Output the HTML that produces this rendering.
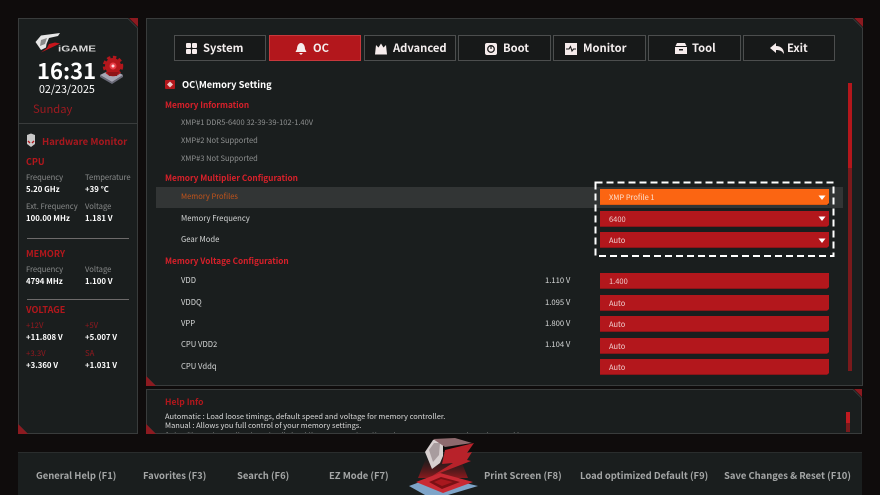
<!DOCTYPE html>
<html><head><meta charset="utf-8">
<style>
html,body{margin:0;padding:0;background:#0f0c0c;}
#p{position:relative;width:880px;height:495px;overflow:hidden;background:#0f0c0c;font-family:"Noto Sans CJK SC","Liberation Sans",sans-serif;color:#fff;}
#p>div,#p>svg{position:absolute;}
.t{white-space:nowrap;line-height:14px;height:14px;}
.g{font-size:7.6px;color:#8a8c8c;}
.v{font-size:7.8px;color:#fff;font-weight:700;}
.rg{font-size:7.8px;color:#94191f;}
.h{font-size:9px;color:#b3171c;font-weight:700;}
.s{font-size:8.25px;color:#d8202a;font-weight:700;}
.i{font-size:7.5px;color:#8e9090;}
.l{font-size:7.7px;color:#d4d6d6;}
.f{left:600px;width:229px;height:16px;line-height:17px;background:#b3171c;border-bottom:1px solid #8a1519;box-sizing:border-box;font-size:7.5px;color:#f0d0d0;padding-left:9px;}
.tab{top:35px;height:26px;box-sizing:border-box;border:1px solid #4c4e4e;background:#171919;}
.tt{top:40px;font-size:11.2px;font-weight:700;color:#f4eeee;white-space:nowrap;line-height:16px;}
.b{top:468px;font-size:9.45px;font-weight:700;color:#a4a6a6;white-space:nowrap;line-height:15px;}
.hr{left:27px;width:102px;height:1px;background:#6d6a6a;}
</style></head><body><div id="p">

<!-- panels -->
<svg style="left:0;top:0" width="880" height="495">
<path d="M18.5 18.5H128L137.5 28V433.5H27L18.5 425Z" fill="#1a1e1e" stroke="#393c3c"/>
<path d="M146.5 18.5H853L862.500 28V385.500H155L146.500 377Z" fill="#1a1e1e" stroke="#393c3c"/>
<path d="M146.5 389.5H853L861.5 398V433.5H155L146.5 425Z" fill="#1a1e1e" stroke="#393c3c"/>
<rect x="18" y="452" width="844" height="43" fill="#1a1e1e"/>
<rect x="18" y="452" width="844" height="1" fill="#2a2d2d"/>
<path d="M129 18H138V27Z" fill="#8c1a20"/>
<path d="M18 424L28 434H18Z" fill="#8c1a20"/>
<path d="M146 376L156 386H146Z" fill="#8c1a20"/>
<path d="M146 424L156 434H146Z" fill="#8c1a20"/>
<path d="M854 18H863V27Z" fill="#8c1a20"/>
<path d="M854 389H862V397Z" fill="#8c1a20"/>
<rect x="19" y="123" width="118" height="1" fill="#393c3c"/>
<rect x="156" y="187" width="687" height="21" fill="#323535"/>
<rect x="848" y="83" width="4" height="85" fill="#b3171c"/>
<rect x="848" y="168" width="4" height="203" fill="#7a1a1c"/>
<rect x="846" y="412" width="4" height="11" fill="#c01a20"/>
<rect x="846" y="423" width="4" height="9" fill="#7a1a1c"/>
<rect x="595.5" y="182.5" width="238" height="73.5" fill="none" stroke="#fff" stroke-width="2" stroke-dasharray="7 4"/>
<!-- logo -->
<path d="M35.500 42L41 35.500L60 33L58 36L49 38L46.500 44L46 47.500L41 50Z" fill="#e6e6e6"/>
<path d="M41 40L47 38L45 44L40 46Z" fill="#8a8a8a"/>
<path d="M41 52.500L60 43.500L55 42.500L49 44L47 48Z" fill="#c8161c"/>
<text x="58" y="51.500" font-family="Liberation Sans" font-weight="700" font-size="8.500" fill="#d6d6d6" textLength="38" lengthAdjust="spacingAndGlyphs">iGAME</text>
<!-- gear icon -->
<path d="M100 75L112 69L123 75L112 82Z" fill="#a6a6b4"/>
<path d="M100 75V77L112 84L123 77V75L112 82Z" fill="#6a6a78"/>
<circle cx="113" cy="66" r="8" fill="#b3171c"/>
<circle cx="113" cy="66" r="9" fill="none" stroke="#b3171c" stroke-width="2.500" stroke-dasharray="3.500 2.500"/>
<circle cx="113" cy="66" r="3.500" fill="#e83a44"/>
<circle cx="113" cy="66" r="1.500" fill="#ffd8dc"/>
<path d="M107 72H119L117 76H109Z" fill="#8e1418"/>
<!-- HW monitor icon -->
<path d="M27 135L31 133.500L35 135V144L31 147L27 144Z" fill="#c8c8c8"/>
<path d="M28 141L30 143M34 141L32 143" stroke="#b3171c" stroke-width="1.400"/>
</svg>

<!-- left top -->
<div class="t" style="left:37px;top:57px;font-size:22px;font-weight:700;line-height:26px;height:26px;">16:31</div>
<div class="t" style="left:39px;top:83px;font-size:10.7px;">02/23/2025</div>
<div class="t" style="left:33px;top:102px;font-size:11.2px;color:#9c1a20;">Sunday</div>

<div class="t" style="left:42px;top:134px;font-size:9.5px;color:#a8181e;font-weight:700;">Hardware Monitor</div>
<div class="t h" style="left:26px;top:155px;">CPU</div>
<div class="t g" style="left:26px;top:171px;">Frequency</div>
<div class="t g" style="left:85px;top:171px;">Temperature</div>
<div class="t v" style="left:26px;top:183px;">5.20 GHz</div>
<div class="t v" style="left:85px;top:183px;">+39 °C</div>
<div class="t g" style="left:26px;top:200px;">Ext. Frequency</div>
<div class="t g" style="left:85px;top:200px;">Voltage</div>
<div class="t v" style="left:26px;top:212px;">100.00 MHz</div>
<div class="t v" style="left:85px;top:212px;">1.181 V</div>
<div class="hr" style="top:238px;"></div>
<div class="t h" style="left:26px;top:247px;">MEMORY</div>
<div class="t g" style="left:26px;top:263px;">Frequency</div>
<div class="t g" style="left:85px;top:263px;">Voltage</div>
<div class="t v" style="left:26px;top:275px;">4794 MHz</div>
<div class="t v" style="left:85px;top:275px;">1.100 V</div>
<div class="hr" style="top:299px;"></div>
<div class="t h" style="left:26px;top:303px;">VOLTAGE</div>
<div class="t rg" style="left:26px;top:319px;">+12V</div>
<div class="t rg" style="left:85px;top:319px;">+5V</div>
<div class="t v" style="left:26px;top:331px;">+11.808 V</div>
<div class="t v" style="left:85px;top:331px;">+5.007 V</div>
<div class="t rg" style="left:26px;top:347px;">+3.3V</div>
<div class="t rg" style="left:85px;top:347px;">SA</div>
<div class="t v" style="left:26px;top:359px;">+3.360 V</div>
<div class="t v" style="left:85px;top:359px;">+1.031 V</div>

<!-- tabs -->
<div class="tab" style="left:174px;width:92px;"></div>
<div class="tab" style="left:269px;width:92px;background:#b3171c;border-color:#c8383c;"></div>
<div class="tab" style="left:364px;width:92px;"></div>
<div class="tab" style="left:458px;width:93px;"></div>
<div class="tab" style="left:553px;width:93px;"></div>
<div class="tab" style="left:648px;width:93px;"></div>
<div class="tab" style="left:743px;width:92px;"></div>
<div class="tt" style="left:203px;">System</div>
<div class="tt" style="left:313px;">OC</div>
<div class="tt" style="left:393px;">Advanced</div>
<div class="tt" style="left:503px;">Boot</div>
<div class="tt" style="left:583px;">Monitor</div>
<div class="tt" style="left:692px;">Tool</div>
<div class="tt" style="left:787px;">Exit</div>

<div class="t" style="left:182px;top:77px;font-size:9.3px;font-weight:700;">OC\Memory Setting</div>
<div class="t s" style="left:165px;top:98px;">Memory Information</div>
<div class="t i" style="left:181px;top:116px;">XMP#1 DDR5-6400 32-39-39-102-1.40V</div>
<div class="t i" style="left:181px;top:134px;">XMP#2 Not Supported</div>
<div class="t i" style="left:181px;top:152px;">XMP#3 Not Supported</div>
<div class="t s" style="left:165px;top:171px;">Memory Multiplier Configuration</div>
<div class="t l" style="left:181px;top:190px;color:#c4541a;font-size:7.5px;">Memory Profiles</div>
<div class="t l" style="left:181px;top:212px;">Memory Frequency</div>
<div class="t l" style="left:181px;top:233px;">Gear Mode</div>
<div class="t s" style="left:165px;top:254px;">Memory Voltage Configuration</div>
<div class="t l" style="left:181px;top:274px;">VDD</div>
<div class="t l" style="left:181px;top:296px;">VDDQ</div>
<div class="t l" style="left:181px;top:317px;">VPP</div>
<div class="t l" style="left:181px;top:338px;">CPU VDD2</div>
<div class="t l" style="left:181px;top:360px;">CPU Vddq</div>
<div class="t l" style="left:545px;top:274px;">1.110 V</div>
<div class="t l" style="left:545px;top:296px;">1.095 V</div>
<div class="t l" style="left:545px;top:317px;">1.800 V</div>
<div class="t l" style="left:545px;top:338px;">1.104 V</div>

<div class="f" style="top:189px;background:#fb6512;border-bottom-color:#e05a10;color:#fbe0d0;">XMP Profile 1</div>
<div class="f" style="top:211px;">6400</div>
<div class="f" style="top:232px;">Auto</div>
<div class="f" style="top:273px;">1.400</div>
<div class="f" style="top:295px;">Auto</div>
<div class="f" style="top:316px;">Auto</div>
<div class="f" style="top:338px;">Auto</div>
<div class="f" style="top:359px;">Auto</div>

<!-- help -->
<div class="t" style="left:165px;top:395px;font-size:8.6px;font-weight:700;color:#b3171c;">Help Info</div>
<div class="t" style="left:165px;top:410px;font-size:7.47px;color:#d8d8d8;">Automatic : Load loose timings, default speed and voltage for memory controller.</div>
<div class="t" style="left:165px;top:419px;font-size:7.47px;color:#d8d8d8;">Manual : Allows you full control of your memory settings.</div>
<div style="left:165px;top:432px;width:680px;height:1px;overflow:hidden;"><div class="t" style="position:absolute;left:0;top:-4px;font-size:7.47px;color:#777;">Auto : The system will automatically load the appropriate settings for your memory configuration and frequency.</div></div>

<!-- bottom -->
<div class="b" style="left:36px;">General Help (F1)</div>
<div class="b" style="left:143px;">Favorites (F3)</div>
<div class="b" style="left:237px;">Search (F6)</div>
<div class="b" style="left:329px;">EZ Mode (F7)</div>
<div class="b" style="left:484px;">Print Screen (F8)</div>
<div class="b" style="left:580px;">Load optimized Default (F9)</div>
<div class="b" style="left:724px;">Save Changes &amp; Reset (F10)</div>

<!-- overlay icons -->
<svg style="left:0;top:0" width="880" height="495">
<g fill="#f6ecec">
<rect x="186" y="43" width="5" height="5" rx="1"/><rect x="192" y="43" width="5" height="5" rx="1"/><rect x="186" y="49" width="5" height="5" rx="1"/><rect x="192" y="49" width="5" height="5" rx="1"/>
<path d="M301 43C303.500 43 305 46 305 49L306.500 52H295.500L297 49C297 46 298.500 43 301 43ZM299 53H303L301 55Z"/>
<path d="M376 45L378.500 47.500L381 43.500L383.500 47.500L386 45L387 54.500H375Z"/>
<rect x="485" y="43" width="12" height="12" rx="2"/>
<rect x="565" y="43" width="12" height="12"/>
<path d="M675 47H687V54H675ZM677 43H685L686.500 46H675.500Z"/>
<path d="M770 48L776 43V46C781 46 784 49 784 54C782 51 780 50 776 50V53Z"/>
</g>
<circle cx="491" cy="49" r="3.300" fill="none" stroke="#1c1c1c" stroke-width="1.300"/>
<rect x="490.400" y="45.500" width="1.200" height="3.500" fill="#1c1c1c"/>
<path d="M566 49H569L570.500 46.500L572 51L573.500 49H576" fill="none" stroke="#1c1c1c" stroke-width="1.100"/>
<rect x="679" y="49" width="4" height="1.500" fill="#1c1c1c"/>
<!-- breadcrumb icon -->
<rect x="165" y="80" width="10" height="9" rx="1" fill="#b3171c"/>
<path d="M170 81.500L173 84.500L170 87.500L167 84.500Z" fill="#f0c8c8"/>
<!-- dropdown arrows -->
<g fill="#fff"><path d="M818.500 195.500H825.500L822 200Z"/><path d="M818.500 216.500H825.500L822 221Z"/><path d="M818.500 238.500H825.500L822 243Z"/></g>
<!-- field corners -->
<g fill="#1a1e1e"><path d="M829 203V205H827Z"/><path d="M829 225V227H827Z"/><path d="M829 246V248H827Z"/><path d="M829 287V289H827Z"/><path d="M829 309V311H827Z"/><path d="M829 330V332H827Z"/><path d="M829 352V354H827Z"/><path d="M829 373V375H827Z"/></g>
<!-- bottom emblem -->
<defs><linearGradient id="gl" x1="0" y1="0" x2="0" y2="1"><stop offset="0" stop-color="#5a1416" stop-opacity="0"/><stop offset="1" stop-color="#8c1a1e"/></linearGradient></defs>
<path d="M426 458L460 458L468 478H418Z" fill="url(#gl)"/>
<path d="M425 452L433 440L443 439L443 456L440 463L432 469Z" fill="#d8d0d0"/>
<path d="M429 450L434 443L440 443L439 455L433 462Z" fill="#a89c9e"/>
<path d="M433 439L455 438L472 443L445 447Z" fill="#8e6a6e"/>
<path d="M445 450L474 443L467 453L472 452L467 460L471 461L432 476L453 463L442 464Z" fill="#b8222a"/>
<path d="M409 486L436 476L478 486L448 495H425Z" fill="#7ea4c8"/>
<path d="M416 482L440 473L473 482L443 493Z" fill="#c92a34"/>
<path d="M429 482L441 477L460 482L442 489Z" fill="#7a1014"/>
<path d="M434 482L441 479L453 482L442 486Z" fill="#a8181e"/>
</svg>
</div></body></html>
